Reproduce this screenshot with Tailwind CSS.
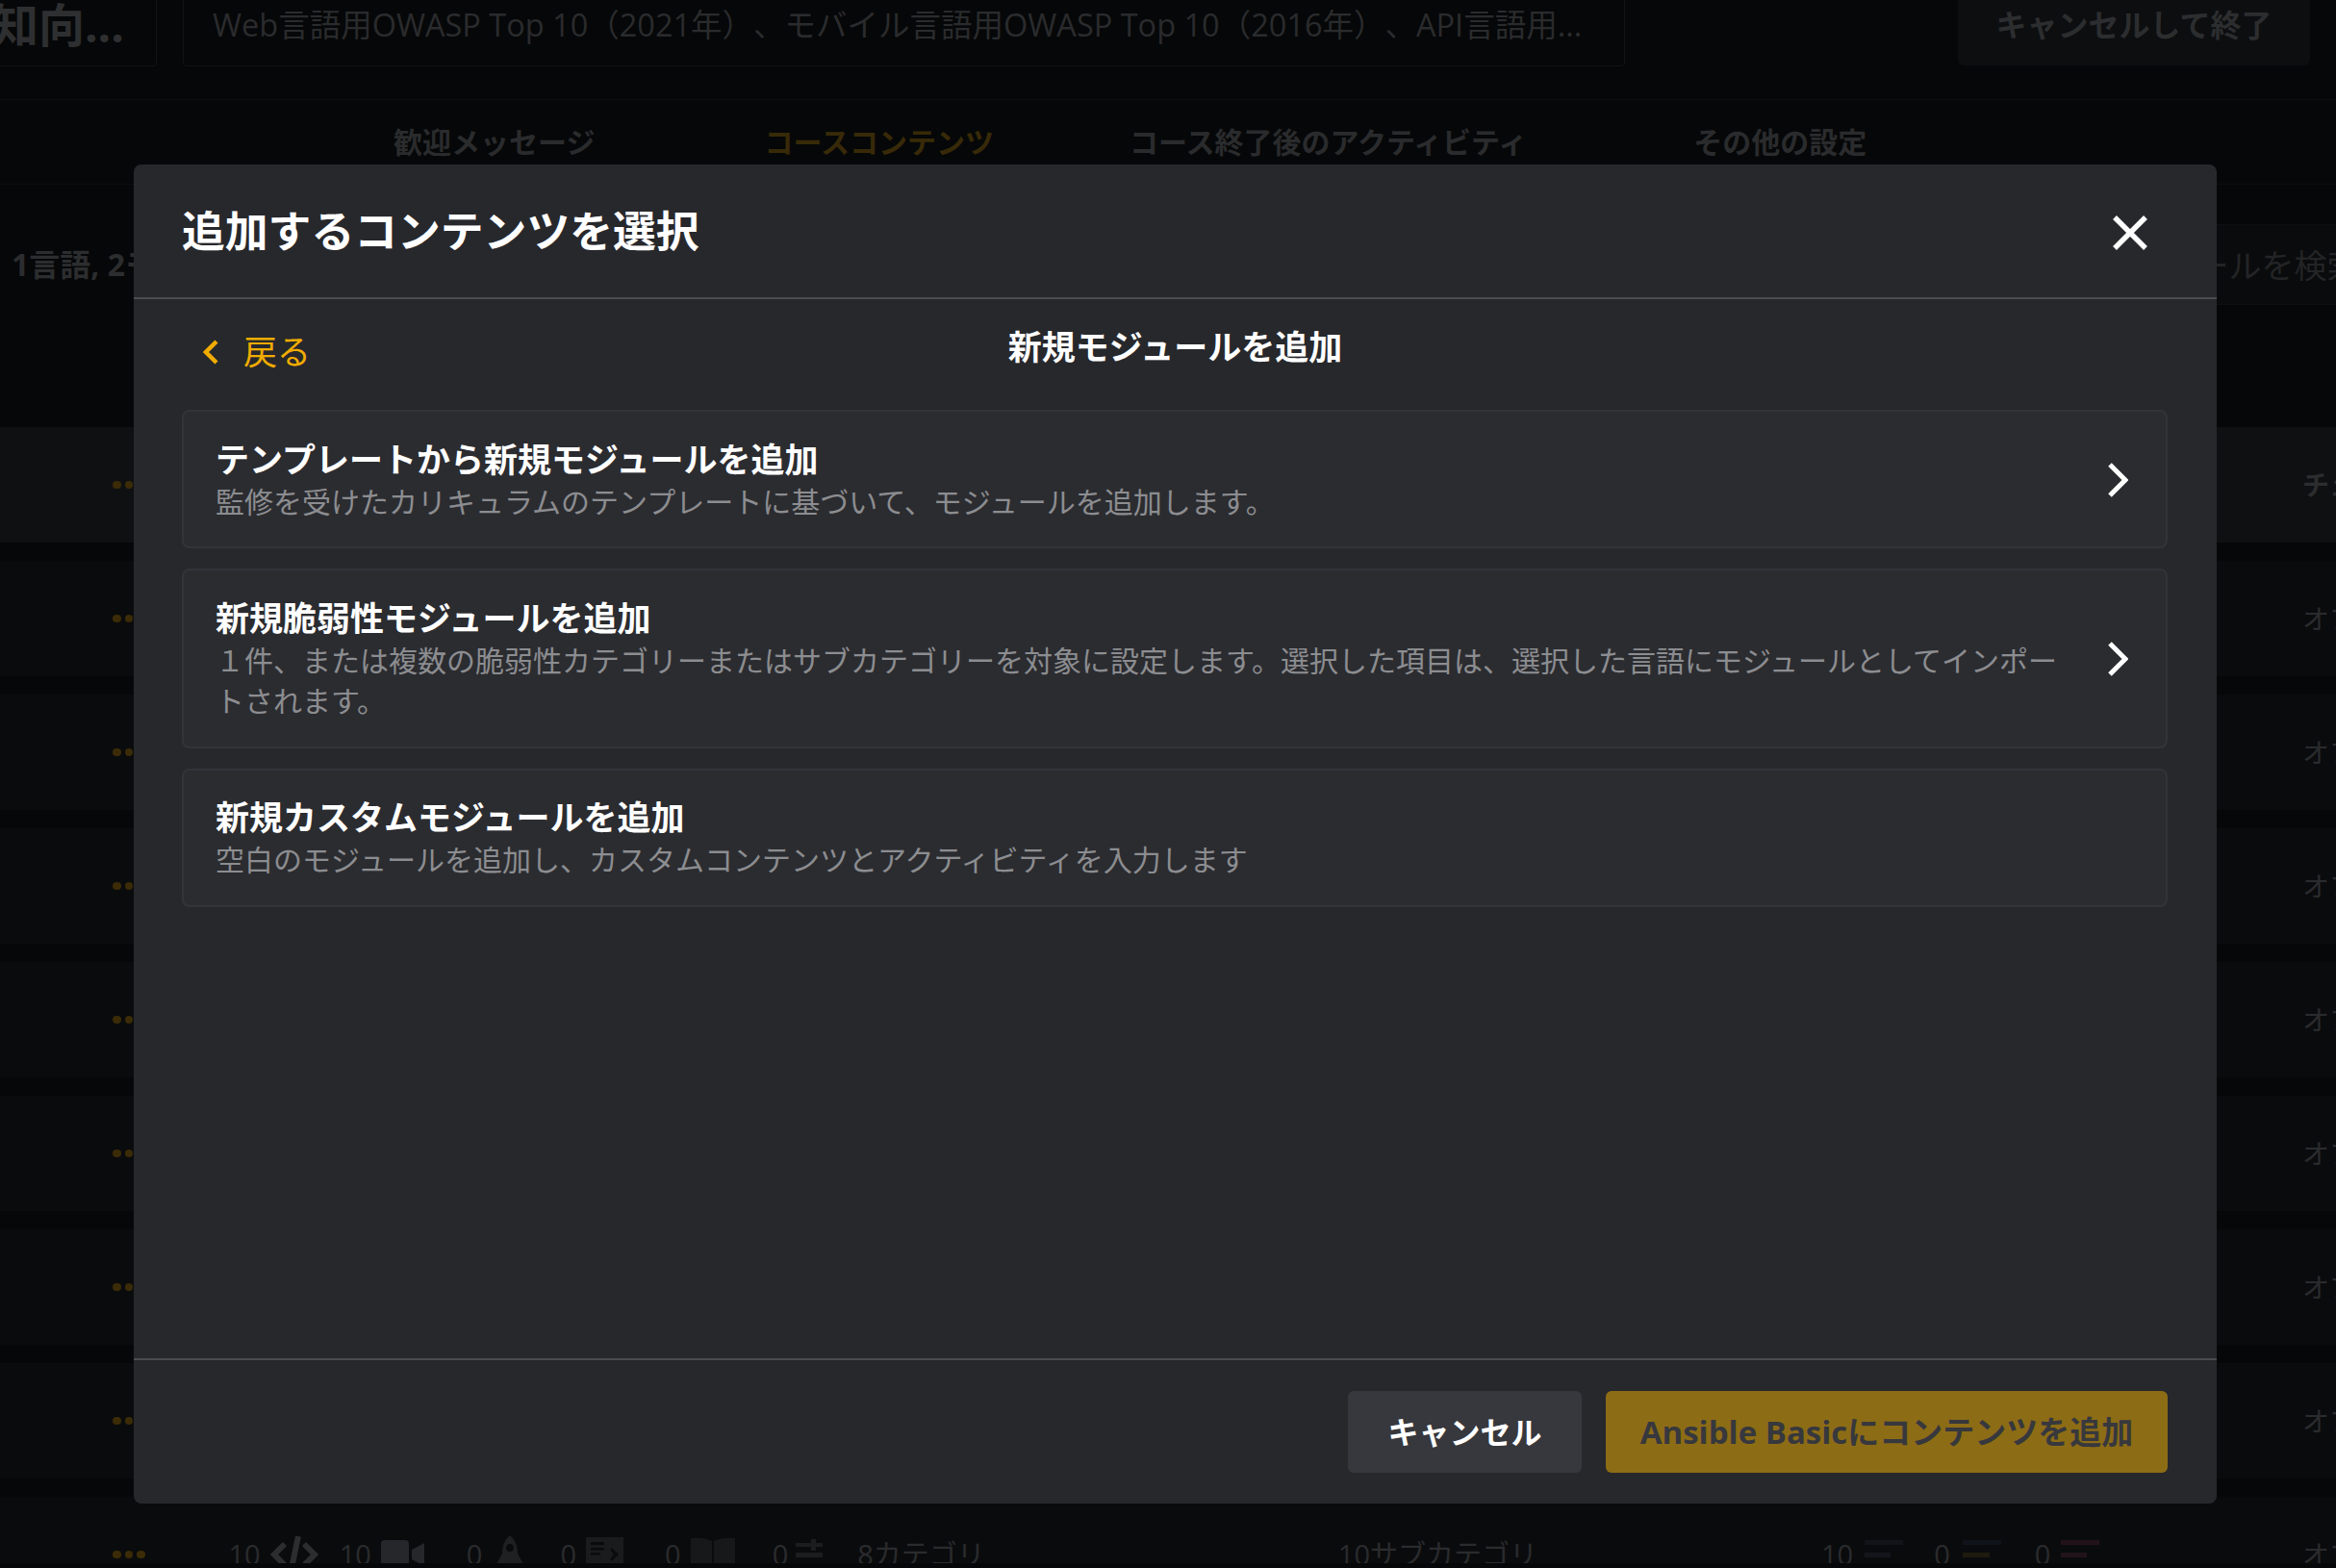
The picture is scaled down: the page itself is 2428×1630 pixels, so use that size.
<!DOCTYPE html>
<html lang="ja">
<head>
<meta charset="utf-8">
<title>追加するコンテンツを選択</title>
<script src="https://cdn.jsdelivr.net/npm/@tailwindcss/browser@4"></script>
</head>
<body class="m-0 bg-[#060708] font-['Open_Sans','Noto_Sans_CJK_JP',sans-serif] [text-spacing-trim:space-all]">
<div class="relative w-[2428px] h-[1630px] overflow-hidden bg-[#060708]">

  <!-- dimmed page behind the dialog -->
  <div class="flex flex-col h-[1625px] overflow-hidden">
    <div class="flex items-start h-[104px] shrink-0 border-b border-[#0c0d0e] pr-[27px]">
      <div class="flex items-start justify-end w-[163px] h-[69px] border border-t-0 border-l-0 border-[#121314] rounded-br-[4px] overflow-hidden pr-[33px]">
        <span class="text-[48px] leading-[52px] font-bold text-[#2e2f31] whitespace-nowrap">知向...</span>
      </div>
      <div class="w-[1499px] h-[69px] ml-[27px] border border-t-0 border-[#121314] rounded-b-[4px] pl-[30px] text-[32.5px] leading-[52px] text-[#2a2b2d] whitespace-nowrap">Web言語用OWASP Top 10（2021年）、モバイル言語用OWASP Top 10（2016年）、API言語用...</div>
      <div class="ml-auto flex justify-center w-[366px] h-[68px] bg-[#0d0e10] rounded-b-[6px] text-[32px] leading-[52px] font-bold text-[#2c2d2f]">キャンセルして終了</div>
    </div>
    <div class="flex h-[88px] shrink-0 border-b border-[#0c0d0e] text-[30px] leading-[88px] font-bold text-[#2a2b2d] whitespace-nowrap">
      <span class="ml-[409px]">歓迎メッセージ</span>
      <span class="ml-[176px] text-[#382a08]">コースコンテンツ</span>
      <span class="ml-[141px]">コース終了後のアクティビティ</span>
      <span class="ml-[173px]">その他の設定</span>
    </div>
    <div class="flex items-start justify-between h-[252px] shrink-0 pt-[41px]">
      <span class="ml-[12px] text-[32px] leading-[84px] font-bold text-[#2c2d2f] whitespace-nowrap">1言語, 2モジュール</span>
      <div class="w-[300px] h-[84px] bg-[#0a0b0c] border-y border-[#0e0f11] pl-[55px] text-[34px] leading-[84px] text-[#232426] whitespace-nowrap overflow-hidden">モジュールを検索</div>
    </div>
    <div class="flex items-center justify-between h-[120px] shrink-0 bg-[#0f1012] pl-[117px] mb-[19px]">
      <div class="flex gap-[4px]"><span class="size-[8.5px] rounded-full bg-[#3b2c07]"></span><span class="size-[8.5px] rounded-full bg-[#3b2c07]"></span><span class="size-[8.5px] rounded-full bg-[#3b2c07]"></span></div>
      <span class="w-[35px] overflow-hidden text-[28px] font-bold text-[#2c2d2f] whitespace-nowrap">チェックポイント</span>
    </div>
    <div class="flex items-center justify-between h-[120px] shrink-0 bg-[#0a0b0d] pl-[117px] mb-[19px]"><div class="flex gap-[4px]"><span class="size-[8.5px] rounded-full bg-[#3b2c07]"></span><span class="size-[8.5px] rounded-full bg-[#3b2c07]"></span><span class="size-[8.5px] rounded-full bg-[#3b2c07]"></span></div><span class="w-[35px] overflow-hidden text-[28px] text-[#2a2b2d] whitespace-nowrap">オプション</span></div>
    <div class="flex items-center justify-between h-[120px] shrink-0 bg-[#0a0b0d] pl-[117px] mb-[19px]"><div class="flex gap-[4px]"><span class="size-[8.5px] rounded-full bg-[#3b2c07]"></span><span class="size-[8.5px] rounded-full bg-[#3b2c07]"></span><span class="size-[8.5px] rounded-full bg-[#3b2c07]"></span></div><span class="w-[35px] overflow-hidden text-[28px] text-[#2a2b2d] whitespace-nowrap">オプション</span></div>
    <div class="flex items-center justify-between h-[120px] shrink-0 bg-[#0a0b0d] pl-[117px] mb-[19px]"><div class="flex gap-[4px]"><span class="size-[8.5px] rounded-full bg-[#3b2c07]"></span><span class="size-[8.5px] rounded-full bg-[#3b2c07]"></span><span class="size-[8.5px] rounded-full bg-[#3b2c07]"></span></div><span class="w-[35px] overflow-hidden text-[28px] text-[#2a2b2d] whitespace-nowrap">オプション</span></div>
    <div class="flex items-center justify-between h-[120px] shrink-0 bg-[#0a0b0d] pl-[117px] mb-[19px]"><div class="flex gap-[4px]"><span class="size-[8.5px] rounded-full bg-[#3b2c07]"></span><span class="size-[8.5px] rounded-full bg-[#3b2c07]"></span><span class="size-[8.5px] rounded-full bg-[#3b2c07]"></span></div><span class="w-[35px] overflow-hidden text-[28px] text-[#2a2b2d] whitespace-nowrap">オプション</span></div>
    <div class="flex items-center justify-between h-[120px] shrink-0 bg-[#0a0b0d] pl-[117px] mb-[19px]"><div class="flex gap-[4px]"><span class="size-[8.5px] rounded-full bg-[#3b2c07]"></span><span class="size-[8.5px] rounded-full bg-[#3b2c07]"></span><span class="size-[8.5px] rounded-full bg-[#3b2c07]"></span></div><span class="w-[35px] overflow-hidden text-[28px] text-[#2a2b2d] whitespace-nowrap">オプション</span></div>
    <div class="flex items-center justify-between h-[120px] shrink-0 bg-[#0a0b0d] pl-[117px] mb-[19px]"><div class="flex gap-[4px]"><span class="size-[8.5px] rounded-full bg-[#3b2c07]"></span><span class="size-[8.5px] rounded-full bg-[#3b2c07]"></span><span class="size-[8.5px] rounded-full bg-[#3b2c07]"></span></div><span class="w-[35px] overflow-hidden text-[28px] text-[#2a2b2d] whitespace-nowrap">オプション</span></div>
    <div class="flex items-center justify-between h-[120px] shrink-0 bg-[#0a0b0d] pl-[117px] mb-[19px]"><div class="flex gap-[4px]"><span class="size-[8.5px] rounded-full bg-[#3b2c07]"></span><span class="size-[8.5px] rounded-full bg-[#3b2c07]"></span><span class="size-[8.5px] rounded-full bg-[#3b2c07]"></span></div><span class="w-[35px] overflow-hidden text-[28px] text-[#2a2b2d] whitespace-nowrap">オプション</span></div>
    <div class="flex items-center h-[120px] shrink-0 bg-[#0a0b0d] pl-[117px] text-[29px] text-[#2a2b2d] whitespace-nowrap">
      <div class="flex gap-[4px]"><span class="size-[8.5px] rounded-full bg-[#3b2c07]"></span><span class="size-[8.5px] rounded-full bg-[#3b2c07]"></span><span class="size-[8.5px] rounded-full bg-[#3b2c07]"></span></div>
      <span class="ml-[87px]">10</span>
      <svg class="ml-[10px] shrink-0" width="50" height="40" viewBox="0 0 50 40" fill="none" stroke="#2c2d2e" stroke-width="6"><path d="M15 9 4 20l11 11M35 9l11 11-11 11"/><path d="M29 1 21 39"/></svg>
      <span class="ml-[22px]">10</span>
      <svg class="ml-[10px] shrink-0" width="45" height="30" viewBox="0 0 45 30" fill="#26272a"><rect width="29" height="30" rx="4"/><path d="M32 10 45 3v24L32 20z"/></svg>
      <span class="ml-[44px]">0</span>
      <svg class="ml-[15px] shrink-0" width="28" height="40" viewBox="0 0 28 40" fill="#1f2022"><path fill-rule="evenodd" d="M14 0c5 4 8 11 8 19l6 11H0l6-11C6 11 9 4 14 0zm0 9a4 4 0 1 0 0 8 4 4 0 0 0 0-8zM9 31h10l-5 9z"/></svg>
      <span class="ml-[38px]">0</span>
      <svg class="ml-[10px] shrink-0" width="39" height="36" viewBox="0 0 39 36" fill="#1a1b1d"><path fill-rule="evenodd" d="M0 0h39v36H0zM5 5v3h14V5zm0 6v2.500h14V11zm0 5v2.500h10V16zm22-5-2 2 4 5-4 5 2 2 7-7z"/></svg>
      <span class="ml-[43px]">0</span>
      <svg class="ml-[10px] shrink-0" width="46" height="36" viewBox="0 0 46 36" fill="#17181a"><path d="M0 1c9-1 17 0 22 3v32H0zM24 4c5-3 13-4 22-3v35H24z"/></svg>
      <span class="ml-[39px]">0</span>
      <svg class="ml-[8px] shrink-0" width="28" height="32" viewBox="0 0 28 32" fill="#1c1d1f"><rect y="4" width="28" height="4"/><rect x="16" width="5" height="12"/><rect y="14" width="28" height="5"/><rect x="8" y="26" width="5" height="6"/></svg>
      <span class="ml-[36px]">8カテゴリ</span>
      <span class="ml-[367px]">10サブカテゴリ</span>
      <span class="ml-[295px]">10</span>
      <svg class="ml-[12px] shrink-0" width="40" height="30" viewBox="0 0 40 30"><rect width="40" height="5" fill="#12141a"/><rect y="13" width="27" height="5" fill="#12161a"/></svg>
      <span class="ml-[32px]">0</span>
      <svg class="ml-[13px] shrink-0" width="40" height="30" viewBox="0 0 40 30"><rect width="40" height="5" fill="#11131a"/><rect y="13" width="28" height="5" fill="#1e1a0e"/></svg>
      <span class="ml-[35px]">0</span>
      <svg class="ml-[11px] shrink-0" width="40" height="30" viewBox="0 0 40 30"><rect width="40" height="5" fill="#22131a"/><rect y="13" width="27" height="5" fill="#22131a"/></svg>
      <span class="ml-auto w-[35px] overflow-hidden text-[28px]">オプション</span>
    </div>
  </div>

  <!-- dialog -->
  <div class="absolute left-[139px] top-[171px] w-[2165px] h-[1392px] flex flex-col bg-[#27282c] rounded-[8px]">
    <div class="flex items-center justify-between h-[140px] shrink-0 border-b-2 border-[#4b4c4f] pl-[50px] pr-[72px]">
      <h2 class="text-[44.8px] leading-[60px] font-bold text-white">追加するコンテンツを選択</h2>
      <svg class="mt-[4px]" width="36" height="36" viewBox="0 0 36 36" fill="none" stroke="#ffffff" stroke-width="5.500"><path d="M2 2 34 34M34 2 2 34"/></svg>
    </div>
    <div class="relative flex justify-center items-center h-[115px] shrink-0 text-[35px] font-bold text-white">
      <div class="absolute left-[72px] top-[29px] flex items-center gap-[26px] text-[35px] font-normal text-[#f0ac00]">
        <svg width="16" height="26" viewBox="0 0 16 26" fill="none" stroke="#f0ac00" stroke-width="4.500"><path d="M14 2 3 13l11 11"/></svg>
        <span>戻る</span>
      </div>
      <span class="-mt-[15px]">新規モジュールを追加</span>
    </div>
    <div class="flex flex-col gap-[21px] pl-[50px] pr-[51px]">
      <div class="flex items-center justify-between h-[144px] pl-[33px] pr-[39px] bg-[#2b2c30] border-2 border-[#33343a] rounded-[8px]">
        <div class="flex flex-col">
          <div class="text-[35px] leading-[47px] font-bold text-white">テンプレートから新規モジュールを追加</div>
          <div class="text-[30px] leading-[42px] text-[#8c8d90]">監修を受けたカリキュラムのテンプレートに基づいて、モジュールを追加します。</div>
        </div>
        <svg class="mt-[2px]" width="22" height="36" viewBox="0 0 22 36" fill="none" stroke="#ffffff" stroke-width="5"><path d="M3 2 19 18 3 34"/></svg>
      </div>
      <div class="flex items-center justify-between h-[187px] pl-[33px] pr-[39px] bg-[#2b2c30] border-2 border-[#33343a] rounded-[8px]">
        <div class="flex flex-col w-[1925px]">
          <div class="text-[35px] leading-[46px] font-bold text-white">新規脆弱性モジュールを追加</div>
          <div class="text-[30px] leading-[42px] text-[#8c8d90]">１件、または複数の脆弱性カテゴリーまたはサブカテゴリーを対象に設定します。選択した項目は、選択した言語にモジュールとしてインポートされます。</div>
        </div>
        <svg width="22" height="36" viewBox="0 0 22 36" fill="none" stroke="#ffffff" stroke-width="5"><path d="M3 2 19 18 3 34"/></svg>
      </div>
      <div class="flex items-center h-[144px] pl-[33px] pr-[39px] bg-[#2b2c30] border-2 border-[#33343a] rounded-[8px]">
        <div class="flex flex-col">
          <div class="text-[35px] leading-[46px] font-bold text-white">新規カスタムモジュールを追加</div>
          <div class="text-[30px] leading-[42px] text-[#8c8d90]">空白のモジュールを追加し、カスタムコンテンツとアクティビティを入力します</div>
        </div>
      </div>
    </div>
    <div class="mt-auto flex items-center justify-end gap-[25px] h-[151px] shrink-0 border-t-2 border-[#4b4c4f] pr-[51px]">
      <div class="flex items-center justify-center w-[243px] h-[85px] bg-[#37383d] rounded-[6px] text-[32px] font-bold text-white">キャンセル</div>
      <div class="flex items-center justify-center w-[584px] h-[85px] bg-[#8d6c16] rounded-[6px] text-[33px] font-bold text-[#37383d]">Ansible Basicにコンテンツを追加</div>
    </div>
  </div>
</div>
</body>
</html>
